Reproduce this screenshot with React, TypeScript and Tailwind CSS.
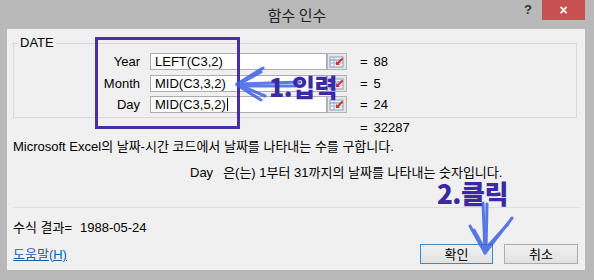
import React from 'react';

const FONT = '"Liberation Sans", "Noto Sans CJK KR", sans-serif';
const KFONT = '"Noto Sans CJK KR", "Liberation Sans", sans-serif';

// small range-picker button beside each argument box
const RefButton: React.FC = () => (
  <div className="w-[20px] h-[17px] border border-[#b4b4b4] bg-[#e6e6e6] flex items-center justify-center">
    <svg width="16" height="12" viewBox="0 0 16 12">
      <rect x="1" y="1" width="13" height="10" fill="#f4f6fa" stroke="#8a9bb8" strokeWidth="1" />
      <line x1="1" y1="4" x2="14" y2="4" stroke="#6b86c4" strokeWidth="1" />
      <line x1="1" y1="7" x2="14" y2="7" stroke="#9aaed6" strokeWidth="1" />
      <line x1="5" y1="1" x2="5" y2="11" stroke="#9aaed6" strokeWidth="1" />
      <path d="M13 3 L8 8" stroke="#d0332b" strokeWidth="2" strokeLinecap="round" />
      <path d="M7 5 L7 9 L11 9 Z" fill="#d0332b" />
    </svg>
  </div>
);

const ArgRow: React.FC<{ label: string; value: string; result: string; caret?: boolean; className?: string }> = ({
  label,
  value,
  result,
  caret,
  className,
}) => (
  <div className={`flex items-center h-[17px] ${className ?? ''}`}>
    <div className="w-[126px] text-right text-[13px] leading-[15px] text-black">{label}</div>
    <div className="ml-[10px] w-[177px] h-[17px] bg-white border border-[#abadb3] flex items-center pl-[4px] text-[13px] leading-[15px] text-black">
      {value}
      {caret && <span className="inline-block w-px h-[13px] bg-black ml-px" />}
    </div>
    <RefButton />
    <div className="ml-[13px] text-[13px] leading-[15px]">=</div>
    <div className="ml-[6px] text-[13px] leading-[15px]">{result}</div>
  </div>
);

export default function App() {
  return (
    <div className="w-[594px] h-[280px] bg-[#b9b9b9] flex flex-col overflow-hidden" style={{ fontFamily: FONT }}>
      {/* title bar */}
      <div className="h-[29px] flex items-start">
        <div className="w-[76px]" />
        <div className="flex-1 text-center text-[15px] leading-[29px] text-[#222]" style={{ fontFamily: KFONT }}>
          함수 인수
        </div>
        <div className="w-[76px] flex items-start justify-end pr-[9px]">
          <div className="mt-[3px] mr-[10px] text-[13px] font-bold text-[#333] leading-[14px]">?</div>
          <div className="w-[43px] h-[20px] bg-[#c75050] flex items-center justify-center text-white text-[14px] font-bold leading-none">
            ×
          </div>
        </div>
      </div>

      <div className="flex flex-1">
        <div className="w-[7px]" />
        {/* client area */}
        <div className="w-[578px] h-[241px] bg-[#f0f0f0] relative flex flex-col text-black">
          {/* group box */}
          <div className="relative ml-[6px] mt-[14px] w-[564px] h-[75px] border border-[#d9d9d9] pt-[9px]">
            <span className="absolute left-[4px] top-[-9px] px-[2px] bg-[#f0f0f0] text-[13px] leading-[15px]">DATE</span>
            <ArgRow label="Year" value="LEFT(C3,2)" result="88" />
            <ArgRow label="Month" value="MID(C3,3,2)" result="5" className="mt-[5px]" />
            <ArgRow label="Day" value="MID(C3,5,2)" result="24" caret className="mt-[4px]" />
          </div>

          <div className="mt-[2px] h-[14px] pl-[353px] text-[13px] leading-[15px] flex">
            <span>=</span>
            <span className="ml-[6px]">32287</span>
          </div>

          <div className="mt-[5px] h-[14px] pl-[6px] text-[13px] leading-[15px]">
            Microsoft Excel의 날짜-시간 코드에서 날짜를 나타내는 수를 구합니다.
          </div>

          <div className="mt-[12px] h-[14px] pl-[183px] text-[13px] leading-[15px] flex">
            <span>Day</span>
            <span className="ml-[10px]">은(는) 1부터 31까지의 날짜를 나타내는 숫자입니다.</span>
          </div>

          <div className="mt-[28px] ml-[6px] w-[567px] h-px bg-[#dcdcdc]" />

          <div className="mt-[12px] h-[14px] pl-[6px] text-[13px] leading-[15px] flex">
            <span>수식 결과=</span>
            <span className="ml-[8px]">1988-05-24</span>
          </div>

          <div className="mt-[10px] h-[20px] flex items-center pl-[6px] pr-[7px]">
            <span className="text-[13px] leading-[15px] text-[#1a5fa8] underline">도움말(H)</span>
            <div className="flex-1" />
            <button className="w-[73px] h-[20px] border border-[#3c8cc8] bg-gradient-to-b from-[#f0f0f0] to-[#e2e2e2] text-[13px] leading-[15px]">
              확인
            </button>
            <button className="ml-[11px] w-[74px] h-[20px] border border-[#acacac] bg-gradient-to-b from-[#f0f0f0] to-[#e2e2e2] text-[13px] leading-[15px]">
              취소
            </button>
          </div>

          {/* annotations drawn over the dialog */}
          <div className="absolute left-[88px] top-[8px] w-[145px] h-[92px] border-[3px] border-[#4a2ea6]" />

          <svg className="absolute left-[218px] top-[33px]" width="80" height="42" viewBox="0 0 80 42">
            <g stroke="#3f63e3" strokeWidth="3" strokeLinecap="round" fill="none" opacity="0.85">
              <path d="M12 22 L75 20" />
              <path d="M14 24 L70 24" />
              <path d="M12 22 L38 6" />
              <path d="M14 22 L36 10" />
              <path d="M12 23 L36 38" />
              <path d="M14 23 L40 34" />
            </g>
          </svg>
          <div
            className="absolute left-[262px] top-[43px] text-[25px] leading-[28px] font-black text-[#3a29a3] tracking-[-0.5px]"
            style={{ fontFamily: KFONT }}
          >
            1.입력
          </div>

          <div
            className="absolute left-[430px] top-[154px] text-[26px] leading-[20px] font-black text-[#3a29a3] tracking-[-0.5px]"
            style={{ fontFamily: KFONT }}
          >
            2.클릭
          </div>
          <svg className="absolute left-[455px] top-[171px]" width="55" height="60" viewBox="0 0 55 60">
            <g stroke="#3f63e3" strokeWidth="3" strokeLinecap="round" fill="none" opacity="0.85">
              <path d="M21 3 L23 52" />
              <path d="M25 4 L24 50" />
              <path d="M23 53 L8 26" />
              <path d="M23 50 L12 30" />
              <path d="M23 53 L50 18" />
              <path d="M24 48 L46 24" />
            </g>
          </svg>
        </div>
        <div className="flex-1" />
      </div>
      <div className="h-[10px]" />
    </div>
  );
}
